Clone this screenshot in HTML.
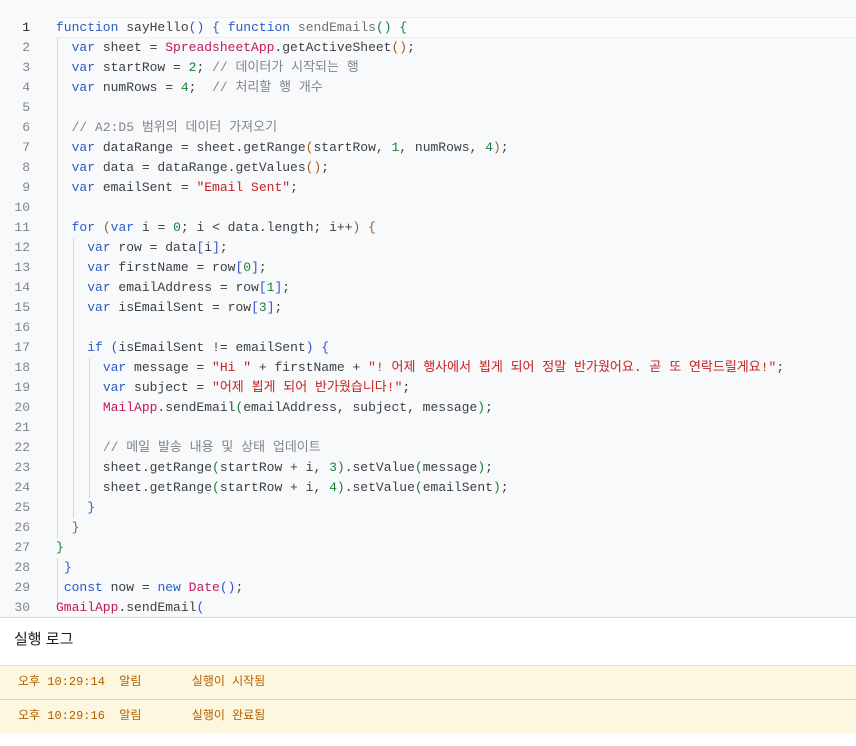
<!DOCTYPE html>
<html><head><meta charset="utf-8"><style>
body{margin:0;width:856px;height:746px;background:#fff;overflow:hidden;font-family:"Liberation Sans","Noto Sans CJK KR",sans-serif}
#ed{position:absolute;left:0;top:0;width:856px;height:617px;background:#f8f9fb;overflow:hidden;border-bottom:1px solid #dadce0}
.cur{position:absolute;left:56px;top:17px;width:800px;height:19px;background:#fbfbfc;border-top:1px solid #eceef1;border-bottom:1px solid #eceef1}
.l{position:absolute;left:0;height:20px;line-height:20px;font-family:"Liberation Mono","Noto Sans CJK KR",monospace;font-size:13px;color:#3c4043;white-space:pre}
.n{position:absolute;left:0;width:30px;text-align:right;color:#80868b}
.c{position:absolute;left:56px}
.g{position:absolute;width:1px;background:#d5d7db}
.k{color:#2a5bc7}.s{color:#c5221f}.m{color:#c2185b}.d{color:#188038}.cm{color:#80868b}
.b1{color:#3451d1}.b2{color:#188038}.b3{color:#a15c1a}
#log{position:absolute;top:618px;left:0;width:856px}
.t{height:47px;line-height:44px;padding-left:14px;font-size:15px;color:#202124;border-bottom:1px solid #e0e0e0}
.r{height:33px;line-height:33px;background:#fef7e0;color:#b06000;font-family:"Liberation Mono","Noto Sans CJK KR",monospace;font-size:12px;padding-left:18px;border-bottom:1px solid #fbd867;white-space:pre}
.r:last-child{border-bottom:none}
</style></head><body>
<div id="ed">
<div class="cur"></div>
<div class="g" style="left:57px;top:38px;height:500px"></div>
<div class="g" style="left:73px;top:238px;height:280px"></div>
<div class="g" style="left:89px;top:358px;height:140px"></div>
<div class="g" style="left:57px;top:558px;height:50px"></div>
<div class="l" style="top:18px"><span class="n" style="color:#202124">1</span><span class="c"><span class="k">function</span> sayHello<span class="b1">()</span> <span class="b1">{</span> <span class="k">function</span> <span style="color:#6f7378">sendEmails</span><span class="b2">()</span> <span class="b2">{</span></span></div>
<div class="l" style="top:38px"><span class="n">2</span><span class="c">  <span class="k">var</span> sheet = <span class="m">SpreadsheetApp</span>.getActiveSheet<span class="b3">()</span>;</span></div>
<div class="l" style="top:58px"><span class="n">3</span><span class="c">  <span class="k">var</span> startRow = <span class="d">2</span>; <span class="cm">// 데이터가 시작되는 행</span></span></div>
<div class="l" style="top:78px"><span class="n">4</span><span class="c">  <span class="k">var</span> numRows = <span class="d">4</span>;  <span class="cm">// 처리할 행 개수</span></span></div>
<div class="l" style="top:98px"><span class="n">5</span></div>
<div class="l" style="top:118px"><span class="n">6</span><span class="c">  <span class="cm">// A2:D5 범위의 데이터 가져오기</span></span></div>
<div class="l" style="top:138px"><span class="n">7</span><span class="c">  <span class="k">var</span> dataRange = sheet.getRange<span class="b3">(</span>startRow, <span class="d">1</span>, numRows, <span class="d">4</span><span class="b3">)</span>;</span></div>
<div class="l" style="top:158px"><span class="n">8</span><span class="c">  <span class="k">var</span> data = dataRange.getValues<span class="b3">()</span>;</span></div>
<div class="l" style="top:178px"><span class="n">9</span><span class="c">  <span class="k">var</span> emailSent = <span class="s">"Email Sent"</span>;</span></div>
<div class="l" style="top:198px"><span class="n">10</span></div>
<div class="l" style="top:218px"><span class="n">11</span><span class="c">  <span class="k">for</span> <span class="b3">(</span><span class="k">var</span> i = <span class="d">0</span>; i &lt; data.length; i++<span class="b3">)</span> <span class="b3">{</span></span></div>
<div class="l" style="top:238px"><span class="n">12</span><span class="c">    <span class="k">var</span> row = data<span class="b1">[</span>i<span class="b1">]</span>;</span></div>
<div class="l" style="top:258px"><span class="n">13</span><span class="c">    <span class="k">var</span> firstName = row<span class="b1">[</span><span class="d">0</span><span class="b1">]</span>;</span></div>
<div class="l" style="top:278px"><span class="n">14</span><span class="c">    <span class="k">var</span> emailAddress = row<span class="b1">[</span><span class="d">1</span><span class="b1">]</span>;</span></div>
<div class="l" style="top:298px"><span class="n">15</span><span class="c">    <span class="k">var</span> isEmailSent = row<span class="b1">[</span><span class="d">3</span><span class="b1">]</span>;</span></div>
<div class="l" style="top:318px"><span class="n">16</span></div>
<div class="l" style="top:338px"><span class="n">17</span><span class="c">    <span class="k">if</span> <span class="b1">(</span>isEmailSent != emailSent<span class="b1">)</span> <span class="b1">{</span></span></div>
<div class="l" style="top:358px"><span class="n">18</span><span class="c">      <span class="k">var</span> message = <span class="s">"Hi "</span> + firstName + <span class="s">"! 어제 행사에서 뵙게 되어 정말 반가웠어요. 곧 또 연락드릴게요!"</span>;</span></div>
<div class="l" style="top:378px"><span class="n">19</span><span class="c">      <span class="k">var</span> subject = <span class="s">"어제 뵙게 되어 반가웠습니다!"</span>;</span></div>
<div class="l" style="top:398px"><span class="n">20</span><span class="c">      <span class="m">MailApp</span>.sendEmail<span class="b2">(</span>emailAddress, subject, message<span class="b2">)</span>;</span></div>
<div class="l" style="top:418px"><span class="n">21</span></div>
<div class="l" style="top:438px"><span class="n">22</span><span class="c">      <span class="cm">// 메일 발송 내용 및 상태 업데이트</span></span></div>
<div class="l" style="top:458px"><span class="n">23</span><span class="c">      sheet.getRange<span class="b2">(</span>startRow + i, <span class="d">3</span><span class="b2">)</span>.setValue<span class="b2">(</span>message<span class="b2">)</span>;</span></div>
<div class="l" style="top:478px"><span class="n">24</span><span class="c">      sheet.getRange<span class="b2">(</span>startRow + i, <span class="d">4</span><span class="b2">)</span>.setValue<span class="b2">(</span>emailSent<span class="b2">)</span>;</span></div>
<div class="l" style="top:498px"><span class="n">25</span><span class="c">    <span class="b1">}</span></span></div>
<div class="l" style="top:518px"><span class="n">26</span><span class="c">  <span class="b3">}</span></span></div>
<div class="l" style="top:538px"><span class="n">27</span><span class="c"><span class="b2">}</span></span></div>
<div class="l" style="top:558px"><span class="n">28</span><span class="c"> <span class="b1">}</span></span></div>
<div class="l" style="top:578px"><span class="n">29</span><span class="c"> <span class="k">const</span> now = <span class="k">new</span> <span class="m">Date</span><span class="b1">()</span>;</span></div>
<div class="l" style="top:598px"><span class="n">30</span><span class="c"><span class="m">GmailApp</span>.sendEmail<span class="b1">(</span></span></div>
</div>
<div id="log">
<div class="t">실행 로그</div>
<div class="r">오후 10:29:14  알림       실행이 시작됨</div>
<div class="r">오후 10:29:16  알림       실행이 완료됨</div>
</div>
</body></html>
